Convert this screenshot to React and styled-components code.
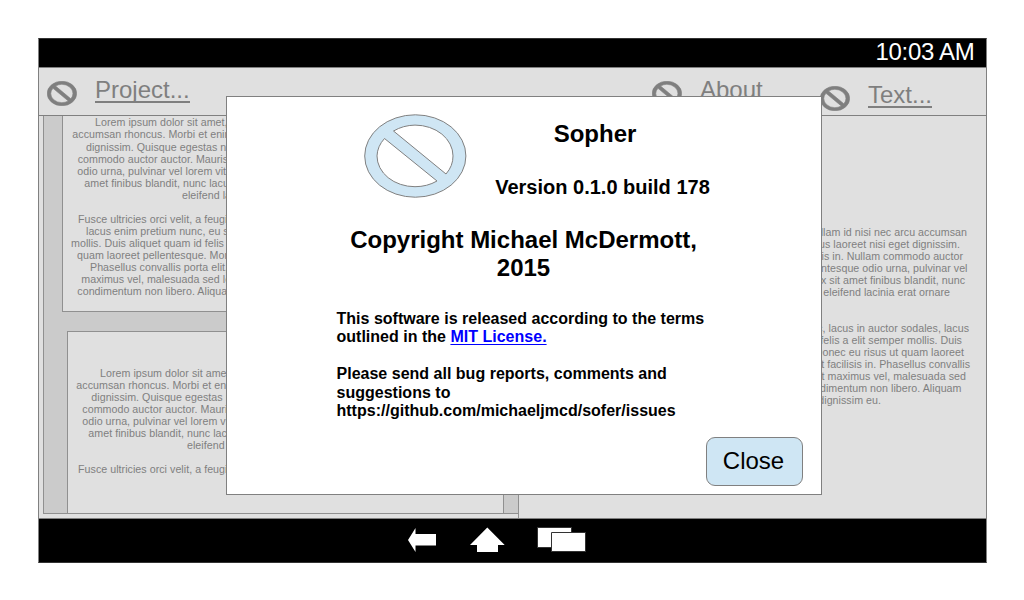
import React from "react";
import styled, { createGlobalStyle } from "styled-components";

const GlobalStyle = createGlobalStyle`
  * { box-sizing: border-box; }
  body { margin: 0; background: #fff; font-family: "Liberation Sans", Arial, sans-serif; }
`;

const Page = styled.div`
  width: 1024px;
  height: 600px;
  padding: 38px;
  overflow: hidden;
`;

const Device = styled.div`
  position: relative;
  width: 949px;
  height: 525px;
  display: flex;
  flex-direction: column;
  border: 1px solid #808080;
  border-top-color: #333;
  border-bottom-color: #333;
  background: #e0e0e0;
`;

const StatusBar = styled.div`
  flex: none;
  height: 28px;
  display: flex;
  justify-content: flex-end;
  padding-right: 11.5px;
  background: #000;
  color: #fff;
  font-size: 24px;
  line-height: 26px;
  letter-spacing: -0.3px;
`;

const Header = styled.div`
  flex: none;
  height: 49px;
  display: flex;
  align-items: flex-start;
  border-top: 1px solid #808080;
  border-bottom: 1px solid #808080;
`;

const MenuItem = styled.div`
  flex: none;
  display: flex;
  width: ${(p) => p.$width}px;
  padding: ${(p) => p.$top}px 0 0 8px;
  gap: 18px;
  color: #7f7f7f;
  font-size: 24px;
  line-height: 28px;
`;

const MenuIcon = styled.div`
  width: 30px;
  height: 25px;
  margin-top: 4px;
  svg { display: block; }
`;

const MenuLabel = styled.span`
  height: 26px;
  border-bottom: ${(p) => (p.$plain ? "none" : "2px solid #7f7f7f")};
  line-height: 25px;
`;

const Content = styled.div`
  flex: none;
  height: 402px;
  display: flex;
`;

const Preview = styled.div`
  width: 480px;
  padding-left: 4px;
  border-right: 1px solid #909090;
`;

const Sheets = styled.div`
  height: 398px;
  display: flex;
  flex-direction: column;
  gap: 19px;
  overflow: hidden;
  border-left: 1px solid #909090;
  border-bottom: 1px solid #909090;
  background: #cbcbcb;
`;

const Sheet = styled.div`
  flex: none;
  height: ${(p) => p.$height}px;
  margin-left: ${(p) => p.$inset}px;
  margin-right: 14px;
  padding-top: ${(p) => p.$top}px;
  border: 1px solid #909090;
  border-top-width: ${(p) => (p.$cut ? 0 : 1)}px;
  border-bottom-width: ${(p) => (p.$cut ? 1 : 0)}px;
  background: #e0e0e0;
`;

const Source = styled.div`
  flex: 1;
  padding-top: 110px;
`;

const Line = styled.div`
  height: ${(p) => p.$h || 12}px;
  padding-left: ${(p) => p.$left || 0}px;
  padding-right: ${(p) => p.$right || 0}px;
  text-align: ${(p) => (p.$right ? "right" : "left")};
  color: #7f7f7f;
  font-size: 10.67px;
  line-height: 12px;
  letter-spacing: 0.04px;
  white-space: pre;
`;

const NavBar = styled.div`
  flex: 1;
  border-top: 1px solid #808080;
  background: #000;
  display: flex;
  padding: 8px 0 0 369px;
  gap: 33px;
  svg { display: block; flex: none; }
  svg:last-child { margin-left: -1px; }
`;

const Dialog = styled.div`
  position: absolute;
  left: 187px;
  top: 57px;
  width: 596px;
  height: 399px;
  padding: 17px 18px 8px 109px;
  display: flex;
  flex-direction: column;
  background: #fff;
  border: 1px solid #808080;
  color: #000;
  font-weight: bold;
`;

const Brand = styled.div`
  display: flex;
  height: 112px;
  padding-left: 28px;
`;

const BrandText = styled.div`
  width: 217px;
  margin-left: 27px;
  text-align: center;
`;

const Title = styled.div`
  margin-top: 6px;
  padding-right: 15px;
  font-size: 24px;
  line-height: 28px;
`;

const Version = styled.div`
  margin-top: 27px;
  font-size: 20px;
  line-height: 24px;
  white-space: nowrap;
`;

const Copyright = styled.div`
  width: 375px;
  text-align: center;
  font-size: 24px;
  line-height: 28px;
`;

const Notice = styled.div`
  margin-top: ${(p) => p.$top}px;
  padding-left: 0.5px;
  font-size: 16px;
  line-height: 18.4px;
  letter-spacing: 0.01px;
  white-space: nowrap;
`;

const License = styled.a`
  color: #0000ff;
  text-decoration: underline;
  text-decoration-thickness: 1px;
  text-underline-offset: 2px;
  text-decoration-skip-ink: none;
`;

const CloseButton = styled.button`
  width: 97px;
  height: 49px;
  margin: auto 0 0 auto;
  padding: 0 2px 1px 0;
  border: 1px solid #808080;
  border-radius: 9px;
  background: #cfe6f4;
  color: #000;
  font: 24px "Liberation Sans", Arial, sans-serif;
`;

const Prohibit = ({ width, height, fill, strokeWidth = 1 }) => (
  <svg width={width} height={height} viewBox="0 0 103 84" preserveAspectRatio="none">
    <path
      fillRule="evenodd"
      fill={fill}
      stroke="#808080"
      strokeWidth={strokeWidth}
      d="M.7 42a50.6 41.2 0 1 0 101.2 0a50.6 41.2 0 1 0-101.2 0Z
         M29.5 17A38 30.8 0 0 1 51 11.1A38 30.8 0 0 1 89 41.9A38 30.8 0 0 1 82 60Z
         M20.5 24.5A38 30.8 0 0 0 13 41.9A38 30.8 0 0 0 51 72.7A38 30.8 0 0 0 73 67Z"
    />
  </svg>
);

const MenuGlyph = () => (
  <MenuIcon>
    <Prohibit width={30} height={25} fill="#7f7f7f" strokeWidth={2} />
  </MenuIcon>
);

const firstSheet = [
  [95, "Lorem ipsum dolor sit amet, consectetur"],
  [72.3, "accumsan rhoncus. Morbi et enim eget"],
  [86, "dignissim. Quisque egestas nisi eget"],
  [77.7, "commodo auctor auctor. Mauris tempor"],
  [77.3, "odio urna, pulvinar vel lorem vitae, ex"],
  [84.3, "amet finibus blandit, nunc lacus elit"],
  [182, "eleifend lacinia"],
  [78, ""],
  [78, "Fusce ultricies orci velit, a feugiat"],
  [86, "lacus enim pretium nunc, eu semper"],
  [71, "mollis. Duis aliquet quam id felis a elit"],
  [77, "quam laoreet pellentesque. Morbi"],
  [90, "Phasellus convallis porta elit, ut"],
  [81.3, "maximus vel, malesuada sed lectus"],
  [77.3, "condimentum non libero. Aliquam"],
];

const secondSheet = [
  [100, "Lorem ipsum dolor sit amet, consec"],
  [76.3, "accumsan rhoncus. Morbi et enim eget"],
  [91.3, "dignissim. Quisque egestas nisi eget"],
  [82.3, "commodo auctor auctor. Mauris tempor"],
  [82.3, "odio urna, pulvinar vel lorem vitae"],
  [88.3, "amet finibus blandit, nunc lacus elit"],
  [187, "eleifend lacinia"],
  [78, ""],
  [78, "Fusce ultricies orci velit, a feugiat"],
];

const source = [
  [967, "Nullam id nisi nec arcu accumsan"],
  [960, "lectus laoreet nisi eget dignissim."],
  [963, "facilisis in. Nullam commodo auctor"],
  [967.5, "pellentesque odio urna, pulvinar vel"],
  [965, "ex sit amet finibus blandit, nunc"],
  [950, "elit eleifend lacinia erat ornare"],
  [950, ""],
  [950, ""],
  [969, "nunc, lacus in auctor sodales, lacus"],
  [962, "id felis a elit semper mollis. Duis"],
  [964, "Donec eu risus ut quam laoreet"],
  [970, "elit facilisis in. Phasellus convallis"],
  [966, "erat maximus vel, malesuada sed"],
  [961.5, "condimentum non libero. Aliquam"],
  [881, "dignissim eu."],
];

export default function App() {
  return (
    <Page>
      <GlobalStyle />
      <Device>
        <StatusBar>10:03 AM</StatusBar>
        <Header>
          <MenuItem $width={605} $top={9}>
            <MenuGlyph />
            <MenuLabel>Project...</MenuLabel>
          </MenuItem>
          <MenuItem $width={168} $top={9}>
            <MenuGlyph />
            <MenuLabel $plain>About</MenuLabel>
          </MenuItem>
          <MenuItem $width={168} $top={14}>
            <MenuGlyph />
            <MenuLabel>Text...</MenuLabel>
          </MenuItem>
        </Header>
        <Content>
          <Preview>
            <Sheets>
              <Sheet $height={196} $inset={18} $top={0.4} $cut>
                {firstSheet.map(([x, t], i) => (
                  <Line key={i} $h={12.07} $left={x - 63}>{t}</Line>
                ))}
              </Sheet>
              <Sheet $height={183} $inset={23} $top={35}>
                {secondSheet.map(([x, t], i) => (
                  <Line key={i} $left={x - 68}>{t}</Line>
                ))}
              </Sheet>
            </Sheets>
          </Preview>
          <Source>
            {source.map(([x, t], i) => (
              <Line key={i} $right={986 - x}>{t}</Line>
            ))}
          </Source>
        </Content>
        <NavBar>
          <svg width="29" height="26" viewBox="408 527 29 26">
            <path fill="#fff" d="M408 540L415.5 528V534H436V545.5H415.5V552Z" />
          </svg>
          <svg width="35" height="26" viewBox="470 527 35 26">
            <path fill="#fff" d="M487.3 527.5L504.7 545H498V552H477V545H470Z" />
          </svg>
          <svg width="49" height="26" viewBox="537 527 49 26">
            <path fill="#fff" stroke="#333" d="M537.5 527.5H571.5V547.5H537.5Z" />
            <path fill="#fff" stroke="#333" d="M551.5 532.5H585.5V551.5H551.5Z" />
          </svg>
        </NavBar>
        <Dialog>
          <Brand>
            <Prohibit width={103} height={84} fill="#cfe6f4" />
            <BrandText>
              <Title>Sopher</Title>
              <Version>Version 0.1.0 build 178</Version>
            </BrandText>
          </Brand>
          <Copyright>Copyright Michael McDermott, 2015</Copyright>
          <Notice $top={28}>
            <div>This software is released according to the terms</div>
            <div>outlined in the <License>MIT License.</License></div>
          </Notice>
          <Notice $top={18.4}>
            <div>Please send all bug reports, comments and</div>
            <div>suggestions to</div>
            <div>https://github.com/michaeljmcd/sofer/issues</div>
          </Notice>
          <CloseButton>Close</CloseButton>
        </Dialog>
      </Device>
    </Page>
  );
}
